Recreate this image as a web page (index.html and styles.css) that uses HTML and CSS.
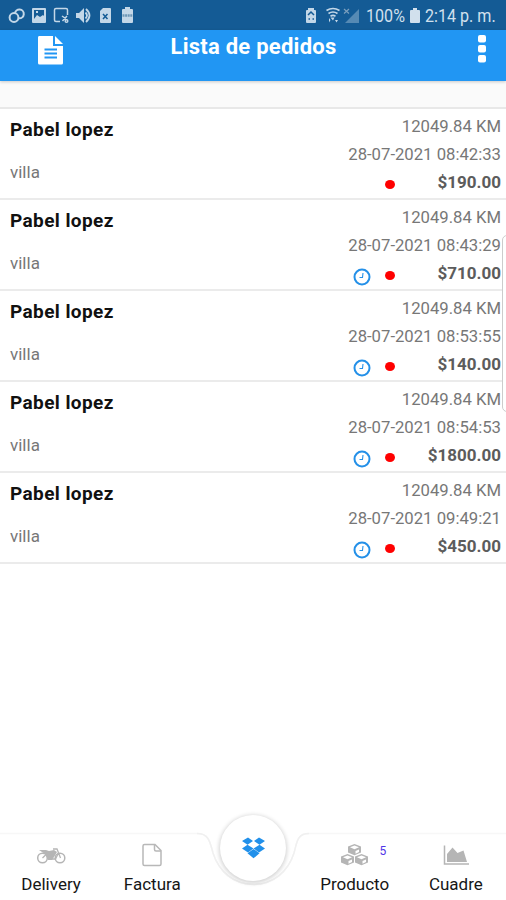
FILE: index.html
```html
<!DOCTYPE html>
<html lang="es">
<head>
<meta charset="utf-8">
<title>Lista de pedidos</title>
<link rel="stylesheet" href="styles.css">
</head>
<body>
<div class="status">
  <svg class="status-left" width="136" height="30" viewBox="0 0 136 30" fill="#c3d7e8">
    <g fill="none" stroke="#c3d7e8" stroke-width="2"><circle cx="14" cy="17.500" r="4.400"/><path d="M15 13.500a4.400 4.400 0 1 1 4 4.800"/></g>
    <path fill-rule="evenodd" d="M33 8h12q1 0 1 1v13q0 1-1 1H33q-1 0-1-1V9q0-1 1-1zm1 2v9l3-4 3 2 3-2 1 1v-6zm2 1h2v2h-2z"/>
    <g fill="none" stroke="#c3d7e8" stroke-width="1.500"><path d="M60 21.500h-4q-1.500 0-1.500-1.500V10q0-1.500 1.500-1.500h10q1.500 0 1.500 1.500v5M62 16l5 3.500M62.500 21l4.500-5"/><circle cx="66.500" cy="21" r="1.300"/></g>
    <path d="M76 13h3l5-5v15l-5-5h-3z"/><path d="M85.500 12.500q3 3 0 6M86 9q7 6.500 0 13" fill="none" stroke="#c3d7e8" stroke-width="1.800"/>
    <path d="M103 8h7q1 0 1 1v13q0 1-1 1h-9q-1 0-1-1V11z"/><path d="M103 14l4.500 5M107.500 14l-4.500 5" stroke="#145b95" stroke-width="1.500"/>
    <path d="M125 7h5v2h2q1 0 1 1v12q0 1-1 1h-9q-1 0-1-1V10q0-1 1-1h2z"/><path d="M122.500 15.500h10" stroke="#6d97b6" stroke-width="2.500" stroke-dasharray="2 .6"/>
  </svg>
  <div class="status-right">
    <svg width="58" height="30" viewBox="0 0 58 30" fill="#c3d7e8">
      <path d="M4 8h6v2h1q1 0 1 1v11q0 1-1 1H3q-1 0-1-1V11q0-1 1-1h1z"/><path d="M4 15l3-3 3 3M4.500 19h1.500M8.500 19H10" fill="none" stroke="#145b95" stroke-width="1.500"/>
      <path d="M22.500 10.500q6.500-4 13 0M24.500 13.500q4.500-3 9 0M26.500 16.200q2.500-1.500 5 0" fill="none" stroke="#c3d7e8" stroke-width="1.700"/><path d="M26.500 17.500h4l-1.500 3zM25 18l1.500 2-1.500 2.500zM31 20h3l-1.500 2.500z"/>
      <path d="M55 9v14H41z" opacity=".38"/><path d="M40 9l5 4.500M45 9l-5 4.500" stroke="#7b9fbe" stroke-width="1.200"/>
    </svg>
    <span class="percent">100%</span>
    <svg class="battery" width="10" height="16" viewBox="0 0 10 16"><path d="M3 0h4v2h2q1 0 1 1v11q0 1-1 1H1q-1 0-1-1V3q0-1 1-1h2z" fill="#d1e0ed"/></svg>
    <span class="time">2:14 p. m.</span>
  </div>
</div>
<header class="bar">
  <svg class="doc" width="25" height="29" viewBox="0 0 25 29"><path d="M1 0h14v10h10v17q0 1.500-1.500 1.500h-22Q0 28.500 0 27V1.500Q0 0 1 0z" fill="#fff"/><path d="M17 0l8 8h-8z" fill="#fff"/><path d="M6.500 13.500H19M6.500 17.500H19M6.500 21.500H19" stroke="#2196f3" stroke-width="1.800"/></svg>
  <h1 class="title">Lista de pedidos</h1>
  <svg class="more" width="8" height="28" viewBox="0 0 8 28" fill="#fff"><rect width="8" height="7.500" rx="2"/><rect y="10" width="8" height="7.500" rx="2"/><rect y="20" width="8" height="7.500" rx="2"/></svg>
</header>
<div class="gap"></div>
<main class="list">
  <article class="order"><div class="who"><b class="name">Pabel lopez</b><span class="place">villa</span></div><div class="info"><span class="km">12049.84 KM</span><span class="date">28-07-2021 08:42:33</span><div class="total"><i class="dot"></i><b class="price">$190.00</b></div></div></article>
  <article class="order"><div class="who"><b class="name">Pabel lopez</b><span class="place">villa</span></div><div class="info"><span class="km">12049.84 KM</span><span class="date">28-07-2021 08:43:29</span><div class="total"><svg class="clock" viewBox="0 0 18 18"><circle cx="9" cy="9" r="7.500"/><path d="M10 5l-.5 4.500H6.500"/></svg><i class="dot"></i><b class="price">$710.00</b></div></div></article>
  <article class="order"><div class="who"><b class="name">Pabel lopez</b><span class="place">villa</span></div><div class="info"><span class="km">12049.84 KM</span><span class="date">28-07-2021 08:53:55</span><div class="total"><svg class="clock" viewBox="0 0 18 18"><circle cx="9" cy="9" r="7.500"/><path d="M10 5l-.5 4.500H6.500"/></svg><i class="dot"></i><b class="price">$140.00</b></div></div></article>
  <article class="order"><div class="who"><b class="name">Pabel lopez</b><span class="place">villa</span></div><div class="info"><span class="km">12049.84 KM</span><span class="date">28-07-2021 08:54:53</span><div class="total"><svg class="clock" viewBox="0 0 18 18"><circle cx="9" cy="9" r="7.500"/><path d="M10 5l-.5 4.500H6.500"/></svg><i class="dot"></i><b class="price">$1800.00</b></div></div></article>
  <article class="order"><div class="who"><b class="name">Pabel lopez</b><span class="place">villa</span></div><div class="info"><span class="km">12049.84 KM</span><span class="date">28-07-2021 09:49:21</span><div class="total"><svg class="clock" viewBox="0 0 18 18"><circle cx="9" cy="9" r="7.500"/><path d="M10 5l-.5 4.500H6.500"/></svg><i class="dot"></i><b class="price">$450.00</b></div></div></article>
  <div class="handle"></div>
</main>
<nav class="nav">
  <svg class="curve" width="506" height="70" viewBox="0 0 506 70" fill="none"><path d="M0 3.500H197C209 3.500 210 12 213 23C219 42 234 54.500 253.500 54.500S288 42 294 23C297 12 297 3.500 309 3.500H506" stroke="#f7f7f7" stroke-width="1.500"/><path d="M197 3.500C209 3.500 210 12 213 23C219 42 234 54.500 253.500 54.500S288 42 294 23C297 12 297 3.500 309 3.500" stroke="#f0f0f0" stroke-width="1.500"/></svg>
  <a class="tab">
    <svg width="30" height="24" viewBox="0 0 30 24" fill="none" stroke="#b5b5b5"><circle cx="6.500" cy="15" r="4.800" stroke-width="1.500"/><circle cx="24" cy="15" r="4.800" stroke-width="1.500"/><path d="M6.500 15l5-5 4 6h4l3-6M17 6h4l3.500 9" stroke-width="1.300"/><path d="M3 7h7l3 1 5-1 3 2-3 5-2 3h-4l-3-6z" fill="#b5b5b5" stroke="none"/></svg>
    <span>Delivery</span>
  </a>
  <a class="tab">
    <svg width="24" height="24" viewBox="0 0 24 24" fill="none" stroke="#b8b8b8" stroke-width="1.500"><path d="M4.500 1.500H15l6 6V21q0 1.500-1.500 1.500h-15Q3 22.500 3 21V3q0-1.500 1.500-1.500z"/><path d="M14.500 2v4.500q0 1.500 1.500 1.500h5"/></svg>
    <span>Factura</span>
  </a>
  <a class="tab main-tab"><span class="fab">
    <svg width="24" height="24" viewBox="0 0 24 24" fill="#2190ea"><path d="M7 1.500L12 5 6.500 8.700 1 5zM18 1.500L24 5l-5.500 3.700L13 5zM6.500 8.700L12.500 12.500 7 16.500 1 12.500zM18.500 8.700L24 12.500l-6 4L12.500 12.500z"/><path d="M12.500 13l6 4.300-6 5-6-5z"/></svg>
  </span></a>
  <a class="tab">
    <svg width="30" height="24" viewBox="0 0 30 24"><g fill="#b5b5b5"><path d="M14.500 1l6.500 2.500v6l-6.500 2.700L8 9.500v-6zM7.500 11l6.500 2.500v6l-6.500 2.700L1 19.500v-6zM21.500 11l6.500 2.500v6l-6.500 2.700L15 19.500v-6z"/></g><g fill="#fff"><path d="M14.500 2.500l4.500 1.700-4.500 2-4.500-2zM15.500 8l3.500-1.600v2.700l-3.500 1.600zM7.500 12.500l4.500 1.700-4.500 2-4.500-2zM8.500 18l3.500-1.600v2.700l-3.500 1.600zM21.500 12.500l4.500 1.700-4.500 2-4.500-2zM22.500 18l3.500-1.600v2.700l-3.500 1.600z"/></g></svg>
    <span>Producto</span><span class="badge">5</span>
  </a>
  <a class="tab">
    <svg width="28" height="24" viewBox="0 0 28 24"><path d="M2.500 2.500v18.500H27" fill="none" stroke="#b5b5b5" stroke-width="1.500"/><path d="M5 19V11l5.500-6.500 5 5.500 6-2.500L25 19z" fill="#b5b5b5"/></svg>
    <span>Cuadre</span>
  </a>
</nav>
</body>
</html>
```
FILE: styles.css
```css
* { box-sizing: border-box; }
body {
  margin: 0;
  height: 900px;
  display: flex;
  flex-direction: column;
  overflow: hidden;
  background: #fff;
  font-family: Roboto, sans-serif;
}
svg { display: block; flex: none; }
.status {
  height: 30px;
  display: flex;
  justify-content: space-between;
  background: #145b95;
  color: #d1e0ed;
}
.status-right {
  display: flex;
  align-items: center;
  padding-right: 11px;
  font-size: 18.5px;
  line-height: 30px;
  white-space: nowrap;
}
.percent, .time { padding-top: 2px; transform-origin: left center; }
.percent { width: 38px; margin-left: 4px; transform: scaleX(.87); }
.battery { margin: 1px 5px 0 6px; }
.time { width: 70px; transform: scaleX(.87); }
.bar {
  height: 51px;
  display: grid;
  grid-template-columns: 101px 1fr 101px;
  align-items: start;
  background: #2196f3;
  box-shadow: 0 1px 3px #0003;
  position: relative;
}
.doc { margin: 6px 0 0 38px; }
.title {
  margin: 4px 0 0 1px;
  text-align: center;
  color: #fff;
  font-size: 22px;
  line-height: 25px;
  font-weight: 700;
  letter-spacing: .25px;
}
.more { margin: 5px 0 0 73px; }
.gap { height: 26px; background: #fafafa; }
.list { position: relative; border-top: 2px solid #e8e8e8; }
.order {
  height: 91px;
  display: flex;
  justify-content: space-between;
  padding: 5px 5px 0 10px;
  border-bottom: 2px solid #ebebeb;
}
.who, .info { display: flex; flex-direction: column; }
.name { padding-top: 1px; font-size: 19px; line-height: 29px; color: #111; letter-spacing: .4px; }
.place { margin-top: 14px; font-size: 17px; line-height: 28px; color: #777; }
.info { align-items: flex-end; font-size: 16.7px; color: #777; }
.km { line-height: 26px; }
.date { line-height: 29px; }
.total { display: flex; align-items: center; height: 27px; margin-top: -1px; }
.clock { width: 18px; height: 18px; margin: 8px 14px 0 0; fill: none; stroke: #2490e8; stroke-width: 2; }
.clock path { stroke-width: 1.1; }
.dot { width: 10px; height: 9px; border-radius: 50%; background: #f00; margin-top: 5px; }
.price { width: 106px; text-align: right; color: #5c5c5c; font-size: 17px; }
.handle {
  position: absolute;
  top: 126px;
  right: -8px;
  width: 12px;
  height: 177px;
  border: 1px solid #ccc;
  border-radius: 5px;
  background: #fff;
}
.nav {
  position: relative;
  height: 70px;
  margin-top: auto;
  display: grid;
  grid-template-columns: repeat(5, 1fr);
}
.curve { position: absolute; inset: 0; }
.tab {
  position: relative;
  display: flex;
  flex-direction: column;
  align-items: center;
  padding: 13px 0 0 1px;
  font-size: 17px;
  line-height: 22px;
  color: #161616;
}
.tab > span { margin-top: 6px; }
.main-tab { padding: 0; }
.tab > .fab {
  width: 66px;
  height: 66px;
  margin-top: -15px;
  border-radius: 50%;
  background: #fff;
  box-shadow: 0 1px 4px 1px #0000002e;
  display: flex;
  align-items: center;
  justify-content: center;
}
.tab > .badge {
  position: absolute;
  left: 76px;
  top: 13px;
  margin: 0;
  font-size: 12px;
  line-height: 16px;
  color: #5035e8;
}
```
